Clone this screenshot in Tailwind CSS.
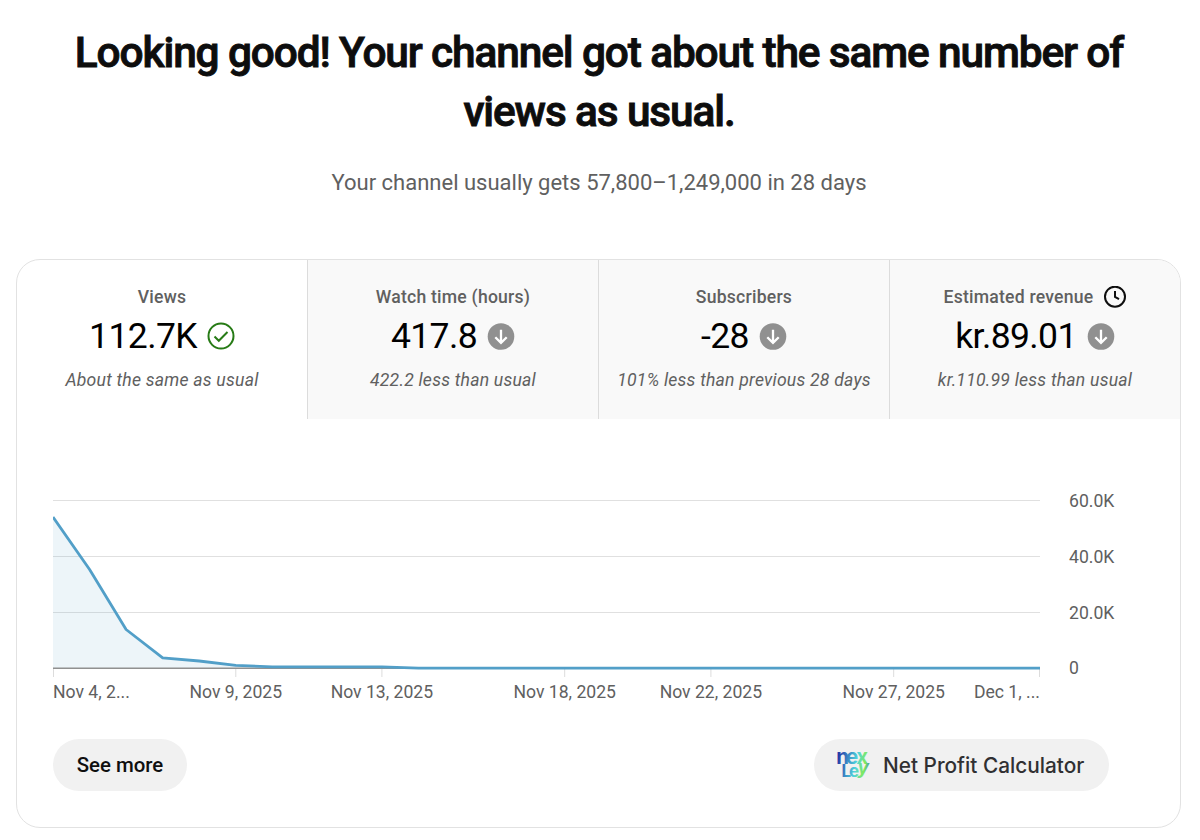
<!DOCTYPE html>
<html lang="en">
  <head>
    <meta charset="UTF-8" />
    <meta name="viewport" content="width=device-width, initial-scale=1.0" />
    <title>Channel analytics</title>
    <script src="https://cdn.jsdelivr.net/npm/@tailwindcss/browser@4"></script>
  </head>
  <body class="h-[840px] overflow-hidden bg-white font-[Roboto,sans-serif] text-[#606060]">
    <header class="h-[259px] pt-[23px] pr-[2px] text-center">
      <h1 class="text-[42.4px] leading-[59px] font-medium tracking-[-1.12px] text-[#0d0d0d] [-webkit-text-stroke:0.9px_#0d0d0d]">
        Looking good! Your channel got about the same number of<br />views as usual.
      </h1>
      <p class="mt-[27px] text-[22px] leading-[30px]">Your channel usually gets 57,800–1,249,000 in 28 days</p>
    </header>

    <main class="ml-4 flex h-[569px] w-[1165px] flex-col overflow-hidden rounded-[24px] border border-[#e2e2e2]">
      <!-- Metric tabs -->
      <div class="grid h-[159px] shrink-0 grid-cols-[290px_291px_291px_291px] text-center">
        <section class="pt-[25px]">
          <h2 class="text-[17.6px] leading-6 font-medium tracking-[0.22px]">Views</h2>
          <div class="mt-[5px] flex h-11 items-center justify-center gap-[10px]">
            <span class="pt-[2px] text-[35.5px] tracking-[-0.6px] text-black">112.7K</span>
            <svg class="size-7" viewBox="0 0 28 28" fill="none" stroke="#277b16" stroke-width="2">
              <circle cx="14" cy="14" r="12.5" />
              <path d="M7.5 14.5l4.3 4.3 8.7-8.8" />
            </svg>
          </div>
          <p class="mt-[10px] text-[17.6px] leading-6 tracking-[0.22px] italic">About the same as usual</p>
        </section>
        <section class="border-l border-[#dcdcdc] bg-[#f9f9f9] pt-[25px]">
          <h2 class="text-[17.6px] leading-6 font-medium tracking-[0.22px]">Watch time (hours)</h2>
          <div class="mt-[5px] flex h-11 items-center justify-center gap-[10px]">
            <span class="pt-[2px] text-[35.5px] tracking-[-0.6px] text-black">417.8</span>
            <svg class="size-7" viewBox="0 0 28 28" fill="none">
              <circle cx="14" cy="14.5" r="13.3" fill="#909090" />
              <path d="M14 7.8v12.8M8.3 15.2l5.7 5.7 5.7-5.7" stroke="#fff" stroke-width="2.3" />
            </svg>
          </div>
          <p class="mt-[10px] text-[17.6px] leading-6 tracking-[0.22px] italic">422.2 less than usual</p>
        </section>
        <section class="border-l border-[#dcdcdc] bg-[#f9f9f9] pt-[25px]">
          <h2 class="text-[17.6px] leading-6 font-medium tracking-[0.22px]">Subscribers</h2>
          <div class="mt-[5px] flex h-11 items-center justify-center gap-[10px]">
            <span class="pt-[2px] text-[35.5px] tracking-[-0.6px] text-black">-28</span>
            <svg class="size-7" viewBox="0 0 28 28" fill="none">
              <circle cx="14" cy="14.5" r="13.3" fill="#909090" />
              <path d="M14 7.8v12.8M8.3 15.2l5.7 5.7 5.7-5.7" stroke="#fff" stroke-width="2.3" />
            </svg>
          </div>
          <p class="mt-[10px] text-[17.6px] leading-6 tracking-[0.22px] italic">101% less than previous 28 days</p>
        </section>
        <section class="border-l border-[#dcdcdc] bg-[#f9f9f9] pt-[25px]">
          <div class="flex items-center justify-center gap-[11px]">
            <h2 class="text-[17.6px] leading-6 font-medium tracking-[0.22px]">Estimated revenue</h2>
            <svg class="size-[22px]" viewBox="0 0 22 22" fill="none" stroke="#0f0f0f" stroke-width="2">
              <circle cx="11" cy="10.7" r="10" />
              <path d="M11 5V10.9l4 2.2" />
            </svg>
          </div>
          <div class="mt-[5px] flex h-11 items-center justify-center gap-[10px]">
            <span class="pt-[2px] text-[35.5px] tracking-[-0.6px] text-black">kr.89.01</span>
            <svg class="size-7" viewBox="0 0 28 28" fill="none">
              <circle cx="14" cy="14.5" r="13.3" fill="#909090" />
              <path d="M14 7.8v12.8M8.3 15.2l5.7 5.7 5.7-5.7" stroke="#fff" stroke-width="2.3" />
            </svg>
          </div>
          <p class="mt-[10px] text-[17.6px] leading-6 tracking-[0.22px] italic">kr.110.99 less than usual</p>
        </section>
      </div>

      <!-- Daily views, Nov 4 - Dec 1 -->
      <svg class="mt-[61px] ml-9 h-[230px] w-[1090px] shrink-0" viewBox="53 480 1090 230" fill="none">
        <path d="M53 500.5H1040M53 556.5H1040M53 612.5H1040" stroke="#e0e0e0" stroke-width="1.2" />
        <path d="M53 517L89.6 569.5L126.1 629.5L162.7 657.8L199.2 661L235.8 665.3L272.3 666.6L381.9 666.8L418.5 668H53Z" fill="#4c9ec4" fill-opacity="0.1" />
        <path d="M53.5 669v8M235.8 669v8M381.9 669v8M564.7 669v8M710.9 669v8M893.7 669v8M1039.5 669v8" stroke="#dcdcdc" />
        <path d="M53 668.2H1040" stroke="#909090" stroke-width="1.4" />
        <path d="M53 517L89.6 569.5L126.1 629.5L162.7 657.8L199.2 661L235.8 665.3L272.3 666.8L381.9 666.9L418.5 668.2H1040" stroke="#529fc8" stroke-width="2.8" stroke-linejoin="round" />
        <g class="fill-[#606060] text-[17.6px]">
          <text x="1069" y="506.5">60.0K</text>
          <text x="1069" y="562.5">40.0K</text>
          <text x="1069" y="618.5">20.0K</text>
          <text x="1069" y="674">0</text>
          <text x="53" y="698">Nov 4, 2...</text>
          <text x="235.8" y="698" text-anchor="middle">Nov 9, 2025</text>
          <text x="381.9" y="698" text-anchor="middle">Nov 13, 2025</text>
          <text x="564.7" y="698" text-anchor="middle">Nov 18, 2025</text>
          <text x="710.9" y="698" text-anchor="middle">Nov 22, 2025</text>
          <text x="893.7" y="698" text-anchor="middle">Nov 27, 2025</text>
          <text x="1040" y="698" text-anchor="end">Dec 1, ...</text>
        </g>
      </svg>

      <div class="mt-[29px] flex items-center justify-between pr-[71px] pl-9">
        <button class="h-[52px] w-[134px] rounded-full bg-[#f1f1f1] pt-px text-[20.4px] font-medium text-[#0f0f0f]">See more</button>
        <button class="flex h-[52px] w-[295px] items-center rounded-full bg-[#f1f1f1] pl-[22px] font-[Inter,sans-serif] text-[20.8px] font-medium text-[#303032]">
          <svg class="mr-[11px] h-[30px] w-9 overflow-visible" viewBox="836 750 36 30">
            <defs>
              <linearGradient id="brand" gradientUnits="userSpaceOnUse" x1="838" y1="758" x2="869" y2="764">
                <stop offset="0" stop-color="#253ba8" />
                <stop offset="0.3" stop-color="#3a86c4" />
                <stop offset="0.6" stop-color="#4fd5dc" />
                <stop offset="0.88" stop-color="#83ea58" />
                <stop offset="1" stop-color="#4aa0a5" />
              </linearGradient>
            </defs>
            <text fill="url(#brand)" class="font-[Inter,sans-serif] font-bold">
              <tspan x="836.3 846 856.3" y="764.4" font-size="20.5">nex</tspan><tspan x="841.5 849" y="776.7" font-size="17">Le</tspan><tspan x="857.5" y="774.2" font-size="19" font-style="italic">y</tspan>
            </text>
          </svg>
          <span class="pt-[2px]">Net Profit Calculator</span>
        </button>
      </div>
    </main>
  </body>
</html>
